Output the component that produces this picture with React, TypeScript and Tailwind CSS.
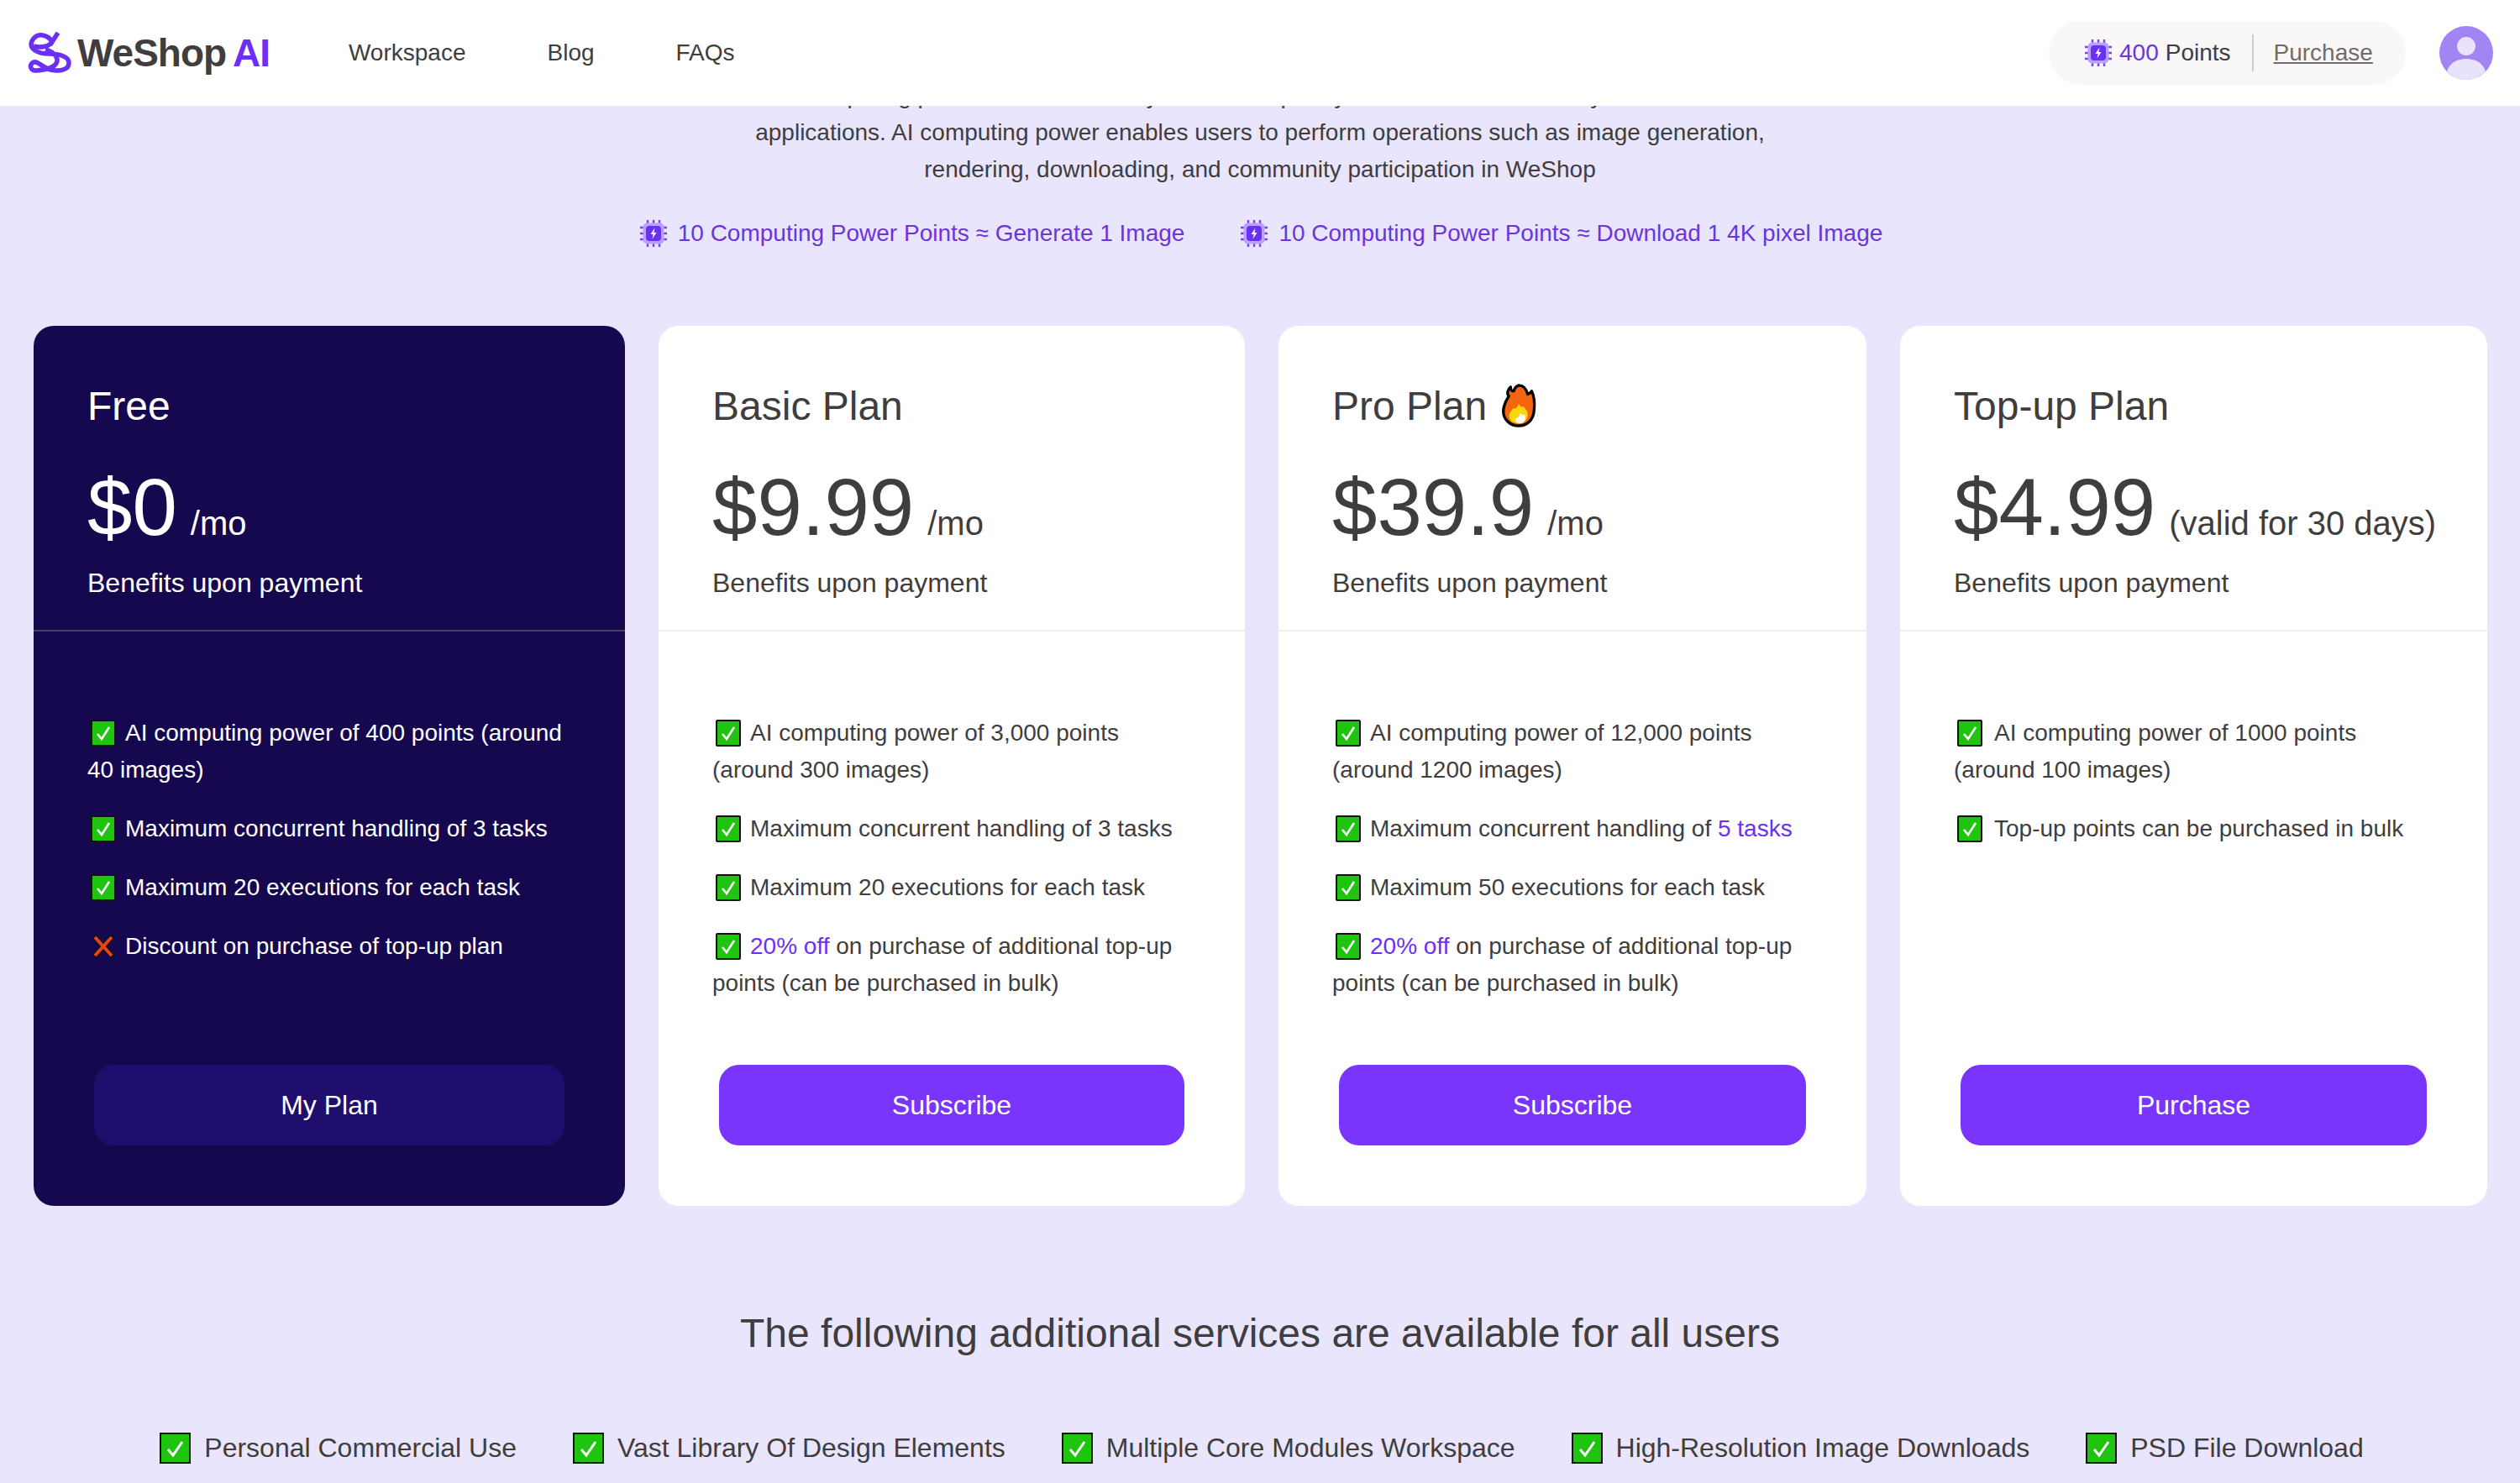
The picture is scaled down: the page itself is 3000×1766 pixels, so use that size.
import React from 'react';

const Check = () => (
  <svg viewBox="0 0 30 32" className="inline-block w-[30px] h-[32px] ml-[4px] mr-[11px] align-[-7px]">
    <rect x="1" y="1" width="28" height="30" fill="#1fc40e" stroke="#111" strokeWidth="2" rx="1" />
    <path d="M8 17 L13 23 L22 9" fill="none" stroke="#fff" strokeWidth="2.6" />
  </svg>
);

const Cross = () => (
  <svg viewBox="0 0 30 32" className="inline-block w-[30px] h-[32px] ml-[4px] mr-[11px] align-[-7px]">
    <path d="M4 4 L26 28 M26 4 L4 28" fill="none" stroke="#111" strokeWidth="7" />
    <path d="M5 5 L25 27 M25 5 L5 27" fill="none" stroke="#e8431c" strokeWidth="4" />
  </svg>
);

const Chip = () => (
  <svg viewBox="0 0 34 34" className="w-[34px] h-[34px] shrink-0">
    <path d="M10 1v4M17 1v4M24 1v4M10 29v4M17 29v4M24 29v4M1 10h4M1 17h4M1 24h4M29 10h4M29 17h4M29 24h4" stroke="#7b3ff6" strokeWidth="2.4" />
    <rect x="4.5" y="4.5" width="25" height="25" rx="5" fill="#b8a3fa" />
    <rect x="8" y="8" width="18" height="18" rx="4" fill="#6b2ff5" />
    <path d="M18.5 10.5 L13.5 18 H16.6 L15.5 23.5 L20.5 16 H17.4 Z" fill="#fff" />
  </svg>
);

const Fire = () => (
  <svg viewBox="0 0 44 56" className="inline-block w-[44px] h-[54px] ml-[16px] align-[-10px]">
    <path d="M22 3 C30 3 32 10 33 14 C35 13 37 12 38 10 C41 16 42 24 41 34 C40 46 32 53 22 53 C11 53 3 45 3 35 C3 27 7 21 10 16 C7 14 8 8 12 5 C12 9 14 11 16 10 C17 6 19 4 22 3 Z" fill="#f5650f" stroke="#000" strokeWidth="3.4" strokeLinejoin="round" />
    <path d="M22 26 C24 30 27 30 28 29 C30 32 34 35 33 41 C32 47 27 50 22 50 C15 50 10 46 10 41 C10 36 14 34 15 31 C17 33 20 31 22 26 Z" fill="#fbd80a" />
    <path d="M24 37 C26 39 28 40 29 39 C31 42 31 50 24 50 C18 50 17 46 19 43 C21 44 23 41 24 37 Z" fill="#fff" />
  </svg>
);

const Logo = () => (
  <svg viewBox="12 10 56 56" className="w-[56px] h-[56px] shrink-0">
    <g fill="none" stroke="#6b2ff5" strokeWidth="5.5">
      <path d="M49 14 L42 25 C38 17 24 12 18 24 C14 34 26 39 38 39 C50 39 62 42 62 50 C62 59 50 60 40 58 C32 56 24 47 20 49 C14 52 16 60 24 59 C34 58 46 56 48 48 C49 42 42 36 34 34" />
      <path d="M20 30 C28 32 38 31 42 25" />
    </g>
  </svg>
);

const Avatar = () => (
  <svg viewBox="0 0 64 64" className="w-[64px] h-[64px]">
    <circle cx="32" cy="32" r="32" fill="#a185f5" />
    <ellipse cx="32" cy="24" rx="11" ry="11" fill="#e8e2fc" />
    <path d="M9 54 C12 44 21 39 32 39 C43 39 52 44 55 54 C49 60 41 64 32 64 C23 64 15 60 9 54 Z" fill="#e8e2fc" />
  </svg>
);

const Hi = ({ children }: { children: React.ReactNode }) => <span className="text-[#6b2ff5]">{children}</span>;

type Feature = { ok?: boolean; text: React.ReactNode };
type Plan = {
  name: string;
  fire?: boolean;
  price: string;
  unit: string;
  cta: string;
  dark?: boolean;
  wide?: boolean;
  features: Feature[];
};

const plans: Plan[] = [
  {
    name: 'Free',
    price: '$0',
    unit: '/mo',
    cta: 'My Plan',
    dark: true,
    features: [
      { ok: true, text: 'AI computing power of 400 points (around 40 images)' },
      { ok: true, text: 'Maximum concurrent handling of 3 tasks' },
      { ok: true, text: 'Maximum 20 executions for each task' },
      { ok: false, text: 'Discount on purchase of top-up plan' },
    ],
  },
  {
    name: 'Basic Plan',
    price: '$9.99',
    unit: '/mo',
    cta: 'Subscribe',
    features: [
      { ok: true, text: 'AI computing power of 3,000 points (around 300 images)' },
      { ok: true, text: 'Maximum concurrent handling of 3 tasks' },
      { ok: true, text: 'Maximum 20 executions for each task' },
      { ok: true, text: <><Hi>20% off</Hi> on purchase of additional top-up points (can be purchased in bulk)</> },
    ],
  },
  {
    name: 'Pro Plan',
    fire: true,
    price: '$39.9',
    unit: '/mo',
    cta: 'Subscribe',
    features: [
      { ok: true, text: 'AI computing power of 12,000 points (around 1200 images)' },
      { ok: true, text: <>Maximum concurrent handling of <Hi>5 tasks</Hi></> },
      { ok: true, text: 'Maximum 50 executions for each task' },
      { ok: true, text: <><Hi>20% off</Hi> on purchase of additional top-up points (can be purchased in bulk)</> },
    ],
  },
  {
    name: 'Top-up Plan',
    price: '$4.99',
    unit: '(valid for 30 days)',
    cta: 'Purchase',
    wide: true,
    features: [
      { ok: true, text: 'AI computing power of 1000 points (around 100 images)' },
      { ok: true, text: 'Top-up points can be purchased in bulk' },
    ],
  },
];

const extras = [
  'Personal Commercial Use',
  'Vast Library Of Design Elements',
  'Multiple Core Modules Workspace',
  'High-Resolution Image Downloads',
  'PSD File Download',
];

const PlanCard: React.FC<{ plan: Plan }> = ({ plan }) => (
  <div className={`h-[1048px] rounded-[24px] flex flex-col ${plan.dark ? 'bg-[#16084f] text-white' : 'bg-white text-[#3f3d3d]'}`}>
    <div className={`pl-[64px] pt-[68px] pb-[34px] border-b-2 ${plan.dark ? 'border-[#4a4453]' : 'border-[#efefef]'}`}>
      <div className="text-[48px] leading-[56px] whitespace-nowrap">
        {plan.name}
        {plan.fire && <Fire />}
      </div>
      <div className="mt-[36px] h-[112px] flex items-baseline whitespace-nowrap">
        <span className="text-[96px] leading-[112px]">{plan.price}</span>
        <span className="text-[40px] ml-[16px]">{plan.unit}</span>
      </div>
      <div className="mt-[12px] text-[32px] leading-[44px]">Benefits upon payment</div>
    </div>
    <ul className="pt-[99px] pl-[64px] pr-[56px] flex flex-col gap-[26px] text-[28px] leading-[44px]">
      {plan.features.map((f, i) => (
        <li key={i}>
          {f.ok ? <Check /> : <Cross />}
          {plan.wide && <span className="inline-block w-[3px]" />}
          {f.text}
        </li>
      ))}
    </ul>
    <button className={`mt-auto mb-[72px] mx-[72px] h-[96px] rounded-[24px] text-[32px] text-white ${plan.dark ? 'bg-[#1f0e6e]' : 'bg-[#7a35fd]'}`}>
      {plan.cta}
    </button>
  </div>
);

export default function App() {
  return (
    <div className="h-[1766px] overflow-hidden bg-[#e9e5fd] text-[#3f3d3d] font-['Liberation_Sans',Arial,sans-serif]">
      <header className="relative z-10 h-[126px] bg-white flex items-center pl-[32px] pr-[32px]">
        <div className="flex items-center gap-[4px]">
          <Logo />
          <div className="text-[46px] font-bold tracking-[-1px] whitespace-nowrap">
            WeShop <span className="text-[#6b2ff5] -ml-[4px]">AI</span>
          </div>
        </div>
        <nav className="ml-[94px] flex gap-[97px] text-[28px]">
          <span>Workspace</span>
          <span>Blog</span>
          <span>FAQs</span>
        </nav>
        <div className="ml-auto flex items-center gap-[40px]">
          <div className="h-[76px] w-[425px] rounded-full bg-[#faf7f8] flex items-center pl-[42px] text-[28px]">
            <Chip />
            <span className="ml-[8px] text-[#6b35d9]">400</span>
            <span className="ml-[8px]">Points</span>
            <span className="ml-[25px] w-[2px] h-[44px] bg-[#cfcccc]" />
            <span className="ml-[24px] underline text-[#716c6c]">Purchase</span>
          </div>
          <Avatar />
        </div>
      </header>

      <main className="-mt-[34px]">
        <div className="text-center text-[28px] leading-[44px]">
          <p>AI computing power is a credit set by the WeShop for your use of the site in any of its other AI</p>
          <p>applications. AI computing power enables users to perform operations such as image generation,</p>
          <p>rendering, downloading, and community participation in WeShop</p>
        </div>
        <div className="mt-[32px] pl-[2px] flex justify-center gap-[66px] text-[28px] leading-[44px] text-[#6b35d9]">
          <div className="flex items-center gap-[12px]"><Chip />10 Computing Power Points ≈ Generate 1 Image</div>
          <div className="flex items-center gap-[12px]"><Chip />10 Computing Power Points ≈ Download 1 4K pixel Image</div>
        </div>
        <div className="mt-[88px] pl-[40px] grid grid-cols-[704px_698px_700px_699px] gap-x-[40px]">
          {plans.map(p => <PlanCard key={p.name} plan={p} />)}
        </div>
        <h2 className="mt-[122px] text-center text-[48px] leading-[60px]">The following additional services are available for all users</h2>
        <div className="mt-[84px] pl-[4px] flex justify-center gap-[67px]">
          {extras.map(t => (
            <div key={t} className="flex items-center gap-[16px] text-[32px] leading-[44px] whitespace-nowrap">
              <svg viewBox="0 0 37 37" className="w-[37px] h-[37px] shrink-0">
                <rect x="1" y="1" width="35" height="35" fill="#1fc40e" stroke="#111" strokeWidth="2" />
                <path d="M10 20 L16 27 L27 11" fill="none" stroke="#fff" strokeWidth="3" />
              </svg>
              {t}
            </div>
          ))}
        </div>
      </main>
    </div>
  );
}
